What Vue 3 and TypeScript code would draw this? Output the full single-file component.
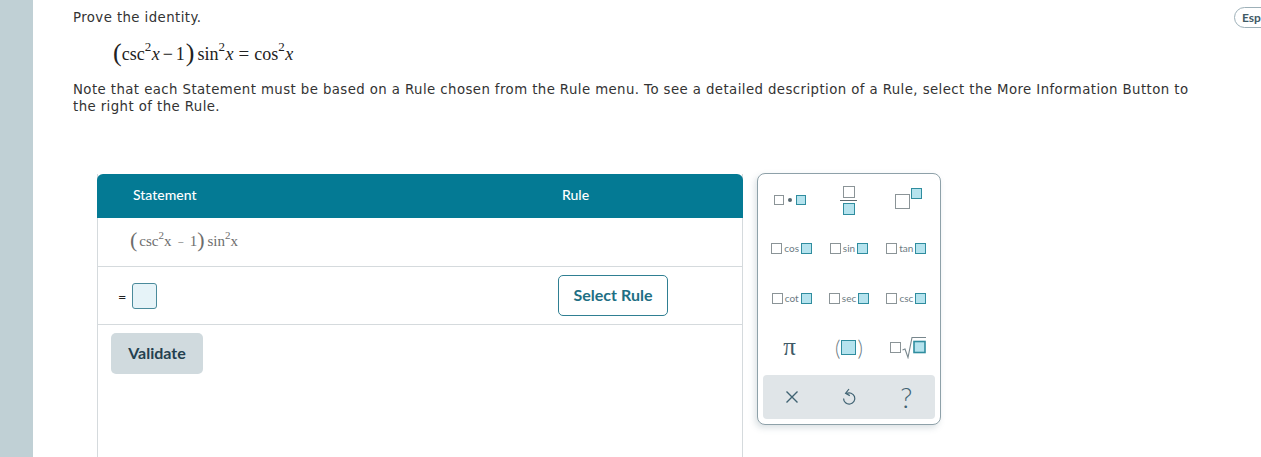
<template>
  <div class="page">
    <aside class="side-rail"></aside>

    <main class="content">
      <div class="question">
        <p class="prompt">Prove the identity.</p>
        <div class="identity">
          <span class="paren">(</span><span class="fn-first">csc<sup>2</sup><i>x</i></span><span class="minus">−</span><span>1</span><span class="paren paren-close">)</span><span class="fn">sin<sup>2</sup><i>x</i></span><span class="eq">=</span><span>cos<sup>2</sup><i>x</i></span>
        </div>
        <p class="note">
          Note that each Statement must be based on a Rule chosen from the Rule menu. To see a detailed description of a Rule, select the More Information Button to the right of the Rule.
        </p>
      </div>

      <div class="workspace">
        <section class="proof">
          <div class="proof-head">
            <div class="col-statement">Statement</div>
            <div class="col-rule">Rule</div>
          </div>
          <div class="given">
            <span class="paren-sm">(</span><span class="given-csc">csc<sup>2</sup>x</span><span class="minus-sm">−</span><span>1</span><span class="paren-sm">)</span><span class="given-fn">sin<sup>2</sup>x</span>
          </div>
          <div class="step">
            <div class="step-left">
              <span class="equals">=</span>
              <span class="answer"></span>
            </div>
            <button class="select-rule">Select Rule</button>
          </div>
          <div class="actions">
            <button class="validate">Validate</button>
          </div>
        </section>

        <section class="palette">
          <div class="palette-grid">
            <!-- product -->
            <div class="cell product">
              <span class="sq sq-empty"></span>
              <span class="dot"></span>
              <span class="sq sq-fill"></span>
            </div>
            <!-- fraction -->
            <div class="cell">
              <div class="fraction">
                <span class="sq-lg sq-empty"></span>
                <span class="bar"></span>
                <span class="sq-lg sq-fill"></span>
              </div>
            </div>
            <!-- exponent -->
            <div class="cell">
              <div class="power">
                <span class="sq-base sq-empty"></span>
                <span class="sq sq-fill sq-up"></span>
              </div>
            </div>

            <div v-for="fn in trigFns" :key="fn" class="cell trig">
              <span class="sq-md sq-empty"></span>
              <span class="trig-name">{{ fn }}</span>
              <span class="sq-md sq-fill"></span>
            </div>

            <div class="cell pi">π</div>
            <div class="cell parens">
              <span class="big-paren">(</span>
              <span class="sq-par sq-fill"></span>
              <span class="big-paren">)</span>
            </div>
            <div class="cell root">
              <span class="sq-md sq-empty"></span>
              <svg width="24" height="24" viewBox="0 0 24 24" class="root-svg">
                <path d="M0.5 15 L3 14 L6 22.5 L10 2.5 H24" fill="none" stroke="#78878d" stroke-width="1.1" />
                <rect x="12" y="6.5" width="11" height="11" fill="#b5e3ee" stroke="#2f8d9f" stroke-width="1.6" />
              </svg>
            </div>
          </div>

          <div class="toolbar">
            <button class="tool" aria-label="Clear">
              <svg width="16" height="16" viewBox="0 0 16 16">
                <path d="M2.5 2.5 L13.5 13.5 M13.5 2.5 L2.5 13.5" stroke="#3f6272" stroke-width="1.4" fill="none" />
              </svg>
            </button>
            <button class="tool" aria-label="Undo">
              <svg width="16" height="20" viewBox="0 0 16 20">
                <path d="M5.4 6.6 A5.6 5.6 0 1 1 2.6 11.4" stroke="#3f6272" stroke-width="1.2" fill="none" />
                <path d="M8 2 L4.6 6.4 L8.8 8.6" stroke="#3f6272" stroke-width="1.2" fill="none" />
              </svg>
            </button>
            <button class="tool help" aria-label="Help">?</button>
          </div>
        </section>
      </div>
    </main>

    <button class="lang">Esp</button>
  </div>
</template>

<script setup lang="ts">
const trigFns: string[] = ['cos', 'sin', 'tan', 'cot', 'sec', 'csc']
</script>

<style>
html,
body {
  margin: 0;
  background: #fff;
  overflow: hidden;
}
</style>

<style scoped>
.page {
  display: flex;
  height: 457px;
  width: 1261px;
  overflow: hidden;
  position: relative;
  background: #fff;
  font-family: "DejaVu Sans", Verdana, sans-serif;
  color: #333;
}

.side-rail {
  width: 33px;
  flex-shrink: 0;
  background: #c0d0d5;
}

.content {
  flex: 1;
  min-width: 0;
}

.question {
  padding: 9px 0 0 40px;
  width: 1120px;
  font-size: 13.3px;
  letter-spacing: 0.42px;
  line-height: 17px;
}

.prompt {
  margin: 0;
}

.identity {
  margin: 10px 0 0 40px;
  height: 34px;
  line-height: 34px;
  font-family: "Liberation Serif", "Times New Roman", serif;
  font-size: 18px;
  letter-spacing: 0;
  color: #222;
  white-space: nowrap;
}

.identity sup {
  font-size: 13px;
  line-height: 0;
  vertical-align: 9px;
}

.identity i {
  margin-left: 0.5px;
}

.identity .paren {
  font-size: 26px;
  font-weight: 400;
  vertical-align: -1px;
}

.paren-close {
  margin-left: 1px;
}

.minus {
  margin: 0 3px;
}

.fn {
  margin-left: 3px;
}

.eq {
  margin: 0 5px;
  font-size: 19px;
}

.note {
  margin: 11px 0 0;
}

.workspace {
  display: flex;
  align-items: flex-start;
  gap: 14px;
  margin: 58px 0 0 64px;
}

.proof {
  width: 646px;
  height: 300px;
  box-sizing: border-box;
  border-left: 1px solid #d5dadd;
  border-right: 1px solid #d5dadd;
  margin-top: 1px;
  font-family: Lato, "Open Sans", sans-serif;
}

.proof-head {
  display: flex;
  height: 44px;
  padding-bottom: 4px;
  box-sizing: border-box;
  margin: 0 -1px;
  background: #047a94;
  color: #fff;
  border-radius: 6px 6px 0 0;
  align-items: center;
  font-size: 14px;
  font-weight: 500;
}

.col-statement {
  width: 465px;
  padding-left: 36px;
  box-sizing: border-box;
}

.given {
  height: 49px;
  box-sizing: border-box;
  padding-left: 32px;
  line-height: 43px;
  border-bottom: 1px solid #d5dadd;
  font-family: "Liberation Serif", "Times New Roman", serif;
  font-size: 15px;
  color: #6d6d6d;
  white-space: nowrap;
}

.given sup {
  font-size: 11px;
  line-height: 0;
  vertical-align: 7px;
}

.given-csc {
  margin-left: 2px;
}

.paren-sm {
  font-size: 22px;
  vertical-align: -1px;
}

.minus-sm {
  margin: 0 6px;
  font-size: 11px;
}

.given-fn {
  margin-left: 3px;
}

.step {
  display: flex;
  align-items: center;
  height: 58px;
  box-sizing: border-box;
  border-bottom: 1px solid #d5dadd;
}

.step-left {
  width: 460px;
  display: flex;
  align-items: center;
  padding-left: 20px;
  box-sizing: border-box;
}

.equals {
  font-family: "DejaVu Sans", sans-serif;
  font-size: 10px;
  color: #222;
  width: 14px;
  padding-top: 3px;
}

.answer {
  display: block;
  width: 23px;
  height: 24px;
  background: #e6f3f8;
  border: 1px solid #4a8a9b;
  border-radius: 3px;
}

.select-rule {
  width: 110px;
  height: 41px;
  background: #fff;
  border: 1px solid #2f7f92;
  border-radius: 5px;
  color: #1e6f84;
  font-family: inherit;
  font-size: 16px;
  font-weight: 700;
  padding: 0 0 2px;
}

.actions {
  padding: 8px 0 0 13px;
}

.validate {
  width: 92px;
  height: 41px;
  border: none;
  border-radius: 5px;
  background: #d0dade;
  color: #24404f;
  font-family: inherit;
  font-size: 16px;
  font-weight: 700;
  padding: 0 0 2px;
}

.palette {
  width: 184px;
  height: 252px;
  box-sizing: border-box;
  background: #fff;
  border: 1px solid #8ea1a9;
  border-radius: 8px;
  padding: 5px;
  box-shadow: -2px 3px 6px rgba(90, 120, 130, 0.22);
  display: flex;
  flex-direction: column;
  justify-content: space-between;
}

.palette-grid {
  display: grid;
  grid-template-columns: repeat(3, 1fr);
  grid-template-rows: 42px 54px 46px 52px;
}

.cell {
  display: flex;
  align-items: center;
  justify-content: center;
  gap: 4px;
}

.sq,
.sq-md,
.sq-lg,
.sq-base,
.sq-par {
  display: block;
  box-sizing: border-box;
  flex-shrink: 0;
}

.sq {
  width: 10px;
  height: 10px;
}

.sq-md {
  width: 11px;
  height: 11px;
}

.sq-lg {
  width: 12px;
  height: 12px;
}

.sq-base {
  width: 15px;
  height: 15px;
}

.sq-par {
  width: 15px;
  height: 15px;
}

.sq-empty {
  background: #fff;
  border: 1.5px solid #8b9497;
}

.sq-fill {
  background: #b5e3ee;
  border: 1.5px solid #2f8d9f;
}

.product {
  margin-right: 3px;
}

.dot {
  width: 4px;
  height: 4px;
  border-radius: 50%;
  background: #55666d;
}

.fraction {
  display: flex;
  flex-direction: column;
  align-items: center;
  gap: 2px;
}

.bar {
  display: block;
  width: 17px;
  height: 1px;
  background: #5b6a70;
}

.power {
  display: flex;
  align-items: flex-start;
  margin: 3px 0 0 4px;
}

.sq-up {
  width: 11px;
  height: 11px;
  margin: -6px 0 0 1px;
}

.trig {
  gap: 2px;
}

.trig-name {
  font-family: Lato, "Open Sans", sans-serif;
  font-size: 10px;
  color: #6b7b82;
}

.pi {
  font-family: "Liberation Serif", serif;
  font-size: 25px;
  color: #3f5a66;
  margin-right: 4px;
}

.parens {
  gap: 1px;
}

.big-paren {
  font-family: Lato, sans-serif;
  font-size: 21px;
  font-weight: 300;
  color: #6b7b82;
}

.root {
  gap: 1px;
  margin-left: 4px;
}

.root-svg {
  display: block;
}

.toolbar {
  display: grid;
  grid-template-columns: repeat(3, 1fr);
  height: 44px;
  background: #e0e5e8;
  border-radius: 4px;
}

.tool {
  background: none;
  border: none;
  padding: 0;
  display: flex;
  align-items: center;
  justify-content: center;
}

.help {
  font-family: Lato, sans-serif;
  font-size: 28px;
  font-weight: 300;
  color: #3f6272;
}

.lang {
  position: absolute;
  left: 1234px;
  top: 7px;
  width: 50px;
  height: 21px;
  box-sizing: border-box;
  background: #fff;
  border: 1px solid #9db0b8;
  border-radius: 11px;
  padding: 0 0 0 7px;
  text-align: left;
  font-family: Lato, "Open Sans", sans-serif;
  font-size: 12px;
  font-weight: 700;
  color: #3f5a66;
}
</style>
